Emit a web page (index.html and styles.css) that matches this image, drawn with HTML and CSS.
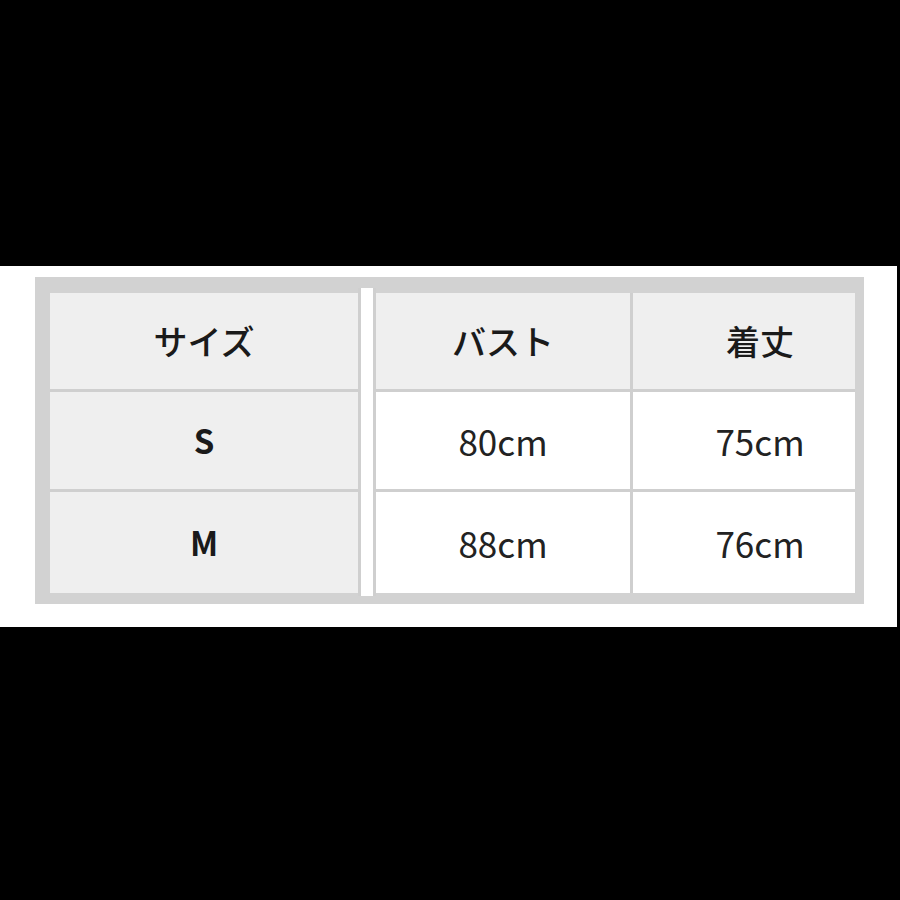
FILE: index.html
```html
<!DOCTYPE html>
<html lang="ja">
<head>
<meta charset="utf-8">
<title>サイズ表</title>
<link rel="stylesheet" href="styles.css">
</head>
<body>
<div class="band">
  <div class="frame">
    <div class="table table-left">
      <div class="cell head">サイズ</div>
      <div class="cell head size">S</div>
      <div class="cell head size">M</div>
    </div>
    <div class="sep"></div>
    <div class="table table-right">
      <div class="cell head">バスト</div>
      <div class="cell head shift">着丈</div>
      <div class="cell data">80cm</div>
      <div class="cell data shift">75cm</div>
      <div class="cell data">88cm</div>
      <div class="cell data shift">76cm</div>
    </div>
  </div>
</div>
</body>
</html>
```

FILE: styles.css
```css
html, body {
  margin: 0;
  padding: 0;
  background: #000;
}
body {
  width: 900px;
  height: 900px;
  overflow: hidden;
  font-family: "Noto Sans CJK JP", "Noto Sans", sans-serif;
  color: #1a1a1a;
}
.band {
  margin-top: 266px;
  height: 361px;
  width: 897px;
  background: #fff;
  padding-top: 11px;
  padding-left: 35px;
  box-sizing: border-box;
}
.frame {
  width: 829px;
  height: 327px;
  box-sizing: border-box;
  background: #d2d2d2;
  padding: 16px 9px 11px 15px;
  display: flex;
}
.table {
  display: grid;
  grid-template-rows: 96px 97px 101px;
  row-gap: 3px;
  background: #cfcfcf;
}
.table-left {
  width: 308px;
  grid-template-columns: 308px;
}
.table-right {
  width: 479px;
  grid-template-columns: 254px 222px;
  column-gap: 3px;
}
.sep {
  width: 12px;
  margin-top: -5px;
  margin-bottom: -3px;
  background: #fff;
  border-left: 3px solid #cfcfcf;
  border-right: 3px solid #cfcfcf;
}
.cell {
  display: flex;
  align-items: center;
  justify-content: center;
  font-size: 34px;
  line-height: 1;
}
.head {
  background: #efefef;
  font-weight: 500;
}
.size {
  font-weight: 600;
  font-size: 33px;
}
.data {
  background: #fff;
  font-weight: 400;
  font-size: 35px;
  color: #222;
}
.shift {
  padding-left: 32px;
}
```
